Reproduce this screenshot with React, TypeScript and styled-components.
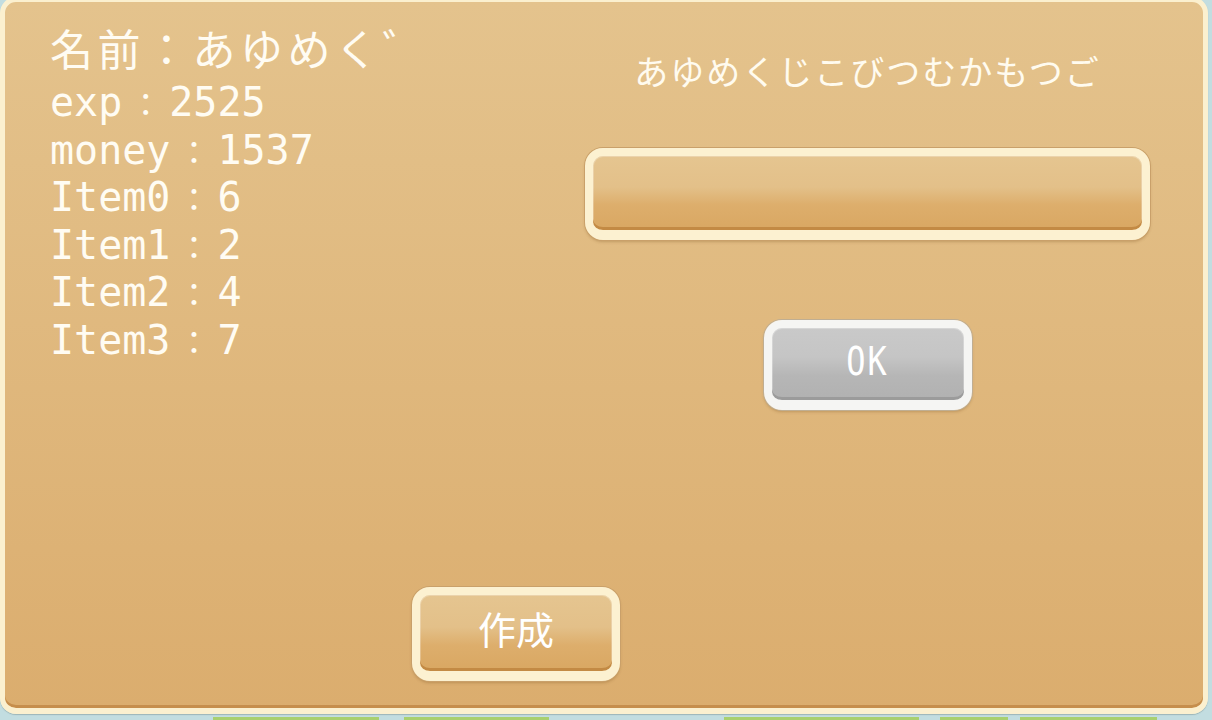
import React from "react";
import styled, { createGlobalStyle, css } from "styled-components";

type Tone = "tan" | "gray";

const stats = [
  { label: "exp", value: 2525 },
  { label: "money", value: 1537 },
  { label: "Item0", value: 6 },
  { label: "Item1", value: 2 },
  { label: "Item2", value: 4 },
  { label: "Item3", value: 7 },
];

// strips of the field behind the dialog: [gap, width]
const ground = [
  [213, 166],
  [25, 145],
  [175, 195],
  [21, 68],
  [12, 137],
];

const GlobalStyle = createGlobalStyle`
  body {
    margin: 0;
    background: #c2dde0;
    font-family: "Noto Sans CJK JP", "Noto Sans", sans-serif;
  }
`;

const tones = {
  tan: {
    rim: "#fcf1d1",
    edge: "#c9a06a",
    fill: "linear-gradient(to bottom, #e5c590 0%, #e3c089 42%, #ddae6c 66%, #d9a762 100%)",
    shade: "#c38a44",
  },
  gray: {
    rim: "#f5f5f3",
    edge: "#bfae93",
    fill: "linear-gradient(to bottom, #c9c9c9 0%, #c5c5c5 40%, #b6b6b6 66%, #b1b1b1 100%)",
    shade: "#9b9b9b",
  },
};

const bevel = css<{ $tone: Tone }>`
  box-sizing: border-box;
  border: 8px solid ${(p) => tones[p.$tone].rim};
  border-bottom-width: 10px;
  border-radius: 18px;
  background: ${(p) => tones[p.$tone].fill};
  box-shadow: inset 0 -3px 0 ${(p) => tones[p.$tone].shade},
    inset 0 0 0 1px rgba(255, 255, 255, 0.25),
    0 0 0 1px ${(p) => tones[p.$tone].edge},
    0 2px 3px rgba(120, 80, 30, 0.3);
`;

const Scene = styled.div`
  width: 1212px;
  height: 720px;
  overflow: hidden;
  display: flex;
  flex-direction: column;
  background: #c2dde0;
`;

const Panel = styled.div`
  flex-shrink: 0;
  margin-top: -3px;
  width: 1208px;
  height: 717px;
  box-sizing: border-box;
  border: 5px solid #fbf0cf;
  border-bottom-width: 6px;
  border-radius: 16px;
  background: linear-gradient(to bottom, #e4c38d, #dbad6e);
  box-shadow: inset 0 -3px 0 #c68e4c, 0 1px 1px rgba(90, 110, 110, 0.35);
  display: flex;
  flex-direction: column;
`;

const Body = styled.div`
  flex: 1;
  display: grid;
  grid-template-columns: 1fr 565px;
  padding-right: 53px;
`;

const Stats = styled.div`
  padding: 18px 0 0 45px;
  color: #fffcf3;
`;

const NameLine = styled.div`
  height: 59px;
  line-height: 55px;
  font-family: "Noto Sans CJK JP", sans-serif;
  font-size: 43px;
  letter-spacing: 4.5px;
  white-space: nowrap;
`;

const StatLine = styled.div`
  height: 47.6px;
  line-height: 47.6px;
  font-family: "DejaVu Sans Mono", "Liberation Mono", monospace;
  font-size: 40px;
  white-space: nowrap;
`;

const Colon = styled.span`
  display: inline-block;
  width: 47px;
  text-align: center;
  font-family: "Noto Sans CJK JP", sans-serif;
  font-size: 32px;
  line-height: 40px;
`;

const Side = styled.div`
  display: flex;
  flex-direction: column;
  align-items: center;
  padding-top: 49px;
`;

const Title = styled.div`
  line-height: 40px;
  font-size: 34px;
  letter-spacing: 2px;
  color: #fffbef;
  white-space: nowrap;
`;

const Field = styled.input<{ $tone: Tone }>`
  ${bevel}
  display: block;
  width: 565px;
  height: 92px;
  margin-top: 57px;
  outline: none;
`;

const ActionButton = styled.button<{ $tone: Tone; $top?: number }>`
  ${bevel}
  width: 208px;
  height: ${(p) => (p.$tone === "gray" ? 90 : 94)}px;
  margin-top: ${(p) => p.$top ?? 0}px;
  padding: 0 0 ${(p) => (p.$tone === "gray" ? 4 : 10)}px;
  display: flex;
  align-items: center;
  justify-content: center;
  color: #ffffff;
  cursor: pointer;
`;

const OkLabel = styled.span`
  display: inline-block;
  font-family: "DejaVu Sans Mono", monospace;
  font-size: 32px;
  letter-spacing: 2px;
  transform: scaleY(1.2);
`;

const CreateLabel = styled.span`
  font-family: "Noto Sans CJK JP", sans-serif;
  font-size: 38px;
  line-height: 44px;
`;

const Footer = styled.div`
  padding: 0 0 27px 407px;
`;

const Ground = styled.div`
  flex: 1;
  display: flex;
  align-items: flex-end;
`;

const Strip = styled.div<{ $gap: number; $width: number }>`
  margin-left: ${(p) => p.$gap}px;
  width: ${(p) => p.$width}px;
  height: 3px;
  background: #a9d06f;
`;

export default function App() {
  return (
    <>
      <GlobalStyle />
      <Scene>
        <Panel>
          <Body>
            <Stats>
              <NameLine>名前：あゆめく゛</NameLine>
              {stats.map((s) => (
                <StatLine key={s.label}>
                  {s.label}
                  <Colon>：</Colon>
                  {s.value}
                </StatLine>
              ))}
            </Stats>
            <Side>
              <Title>あゆめくじこびつむかもつご</Title>
              <Field $tone="tan" readOnly />
              <ActionButton $tone="gray" $top={80}>
                <OkLabel>OK</OkLabel>
              </ActionButton>
            </Side>
          </Body>
          <Footer>
            <ActionButton $tone="tan">
              <CreateLabel>作成</CreateLabel>
            </ActionButton>
          </Footer>
        </Panel>
        <Ground>
          {ground.map(([gap, width], i) => (
            <Strip key={i} $gap={gap} $width={width} />
          ))}
        </Ground>
      </Scene>
    </>
  );
}
